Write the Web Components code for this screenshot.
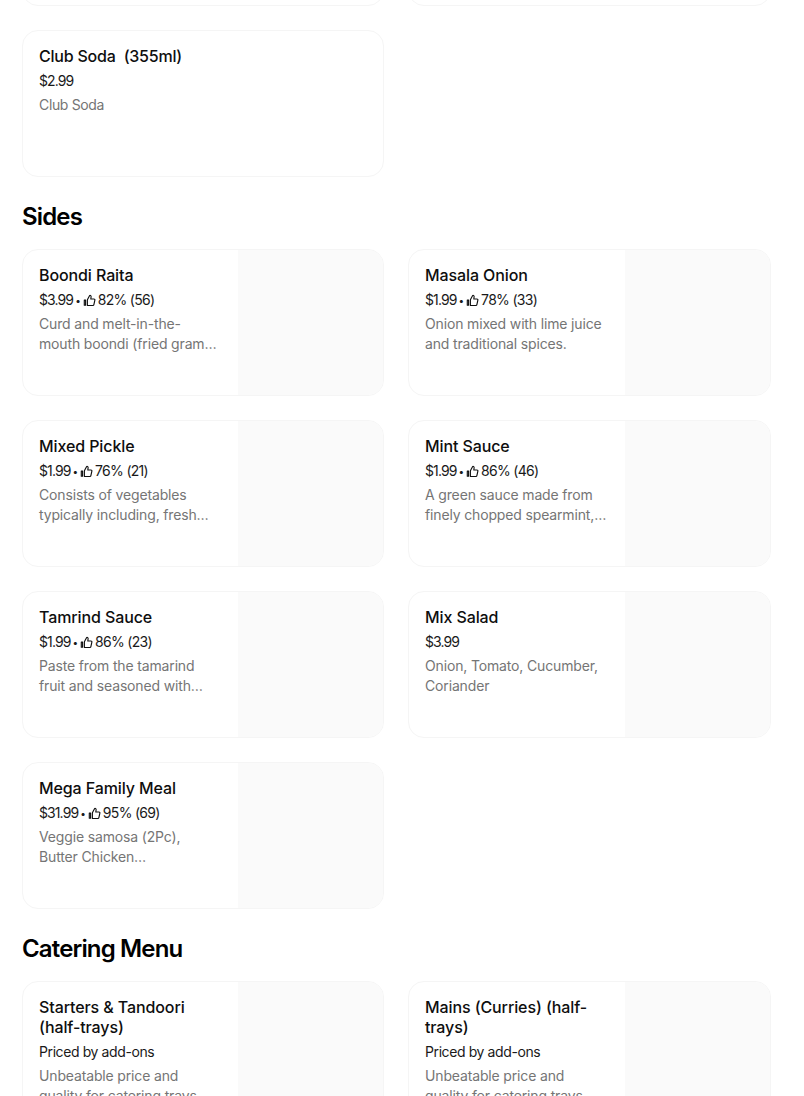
<!doctype html>
<html><head><meta charset="utf-8"><style>
html,body{margin:0;padding:0;background:#fff;height:1096px;overflow:hidden}
body{font-family:Inter,"Liberation Sans",sans-serif;color:#000}
</style></head><body>
<template id="card-t"><style>
:host{display:flex;box-sizing:border-box;height:147px;border:1px solid #f5f5f5;border-radius:16px;overflow:hidden;background:#fff;min-width:0}
.info{flex:1;min-width:0;padding:15px 8px 0 16px;box-sizing:border-box}
.name{font-size:16px;line-height:20px;font-weight:500;color:#0e0e0e;letter-spacing:-.1px;white-space:pre-wrap;padding-right:8px}
:host([tight]) .name{letter-spacing:-.22px}
:host([tight]) .desc{letter-spacing:-.35px}
.meta{display:flex;align-items:center;margin-top:5px;font-size:14px;line-height:20px;color:#1a1a1a;letter-spacing:-.4px;white-space:pre}
.meta.num{letter-spacing:-.9px}
.meta .bul{font-size:10px;margin:0 0 0 2px;letter-spacing:0}
.meta .rate{letter-spacing:-.7px}
.meta svg{width:13px;height:13px;margin:0 2px 0 2px;flex:none}
.desc{margin-top:4px;font-size:14px;line-height:20px;color:#757575;letter-spacing:-.15px;white-space:pre-line}
.img{flex:none;width:145px;background:#fafafa;display:none}
:host([img]) .img{display:block}
</style><div class="info"><div class="name"></div><div class="meta"></div><div class="desc"></div></div><div class="img"></div></template>
<template id="head-t"><style>
:host{display:block;font-size:24px;line-height:28px;font-weight:600;color:#000;letter-spacing:-.85px;margin:26px 0 18px}
</style><slot></slot></template>
<template id="grid-t"><style>
:host{display:grid;grid-template-columns:362px 363px;column-gap:24px;row-gap:24px}
</style><slot></slot></template>
<template id="page-t"><style>
:host{display:block;padding:0 0 0 22px;margin-top:-141px;width:749px}
</style><slot></slot></template>
<menu-page>
<menu-grid>
<menu-card></menu-card>
<menu-card></menu-card>
<menu-card tight name="Club Soda  (355ml)" meta="$2.99" desc="Club Soda"></menu-card>
</menu-grid>
<menu-head>Sides</menu-head>
<menu-grid>
<menu-card img name="Boondi Raita" meta="$3.99" rate="82% (56)" desc="Curd and melt-in-the-
mouth boondi (fried gram…"></menu-card>
<menu-card img name="Masala Onion" meta="$1.99" rate="78% (33)" desc="Onion mixed with lime juice
and traditional spices."></menu-card>
<menu-card img name="Mixed Pickle" meta="$1.99" rate="76% (21)" desc="Consists of vegetables
typically including, fresh…"></menu-card>
<menu-card img name="Mint Sauce" meta="$1.99" rate="86% (46)" desc="A green sauce made from
finely chopped spearmint,…"></menu-card>
<menu-card img name="Tamrind Sauce" meta="$1.99" rate="86% (23)" desc="Paste from the tamarind
fruit and seasoned with…"></menu-card>
<menu-card img name="Mix Salad" meta="$3.99" desc="Onion, Tomato, Cucumber,
Coriander"></menu-card>
<menu-card img name="Mega Family Meal" meta="$31.99" rate="95% (69)" desc="Veggie samosa (2Pc),
Butter Chicken…"></menu-card>
</menu-grid>
<menu-head>Catering Menu</menu-head>
<menu-grid>
<menu-card img name="Starters &amp; Tandoori (half-trays)" meta="Priced by add-ons" text desc="Unbeatable price and
quality for catering trays"></menu-card>
<menu-card img name="Mains (Curries) (half-trays)" meta="Priced by add-ons" text desc="Unbeatable price and
quality for catering trays"></menu-card>
</menu-grid>
</menu-page>
<script>
const THUMB='<svg viewBox="0 0 16 16" fill="none" stroke="#111" stroke-width="1.4" stroke-linejoin="round" stroke-linecap="round"><path d="M5.4 7.2 8.2 1.8c1-.3 1.9.4 1.8 1.5L9.6 6.2h3.9c.8 0 1.3.7 1.1 1.4l-1.2 5.5c-.1.6-.6 1-1.2 1H5.4z"/><path d="M1.6 7.6h1.6v6.3H1.6z"/></svg>';
function tpl(id){return document.getElementById(id).content.cloneNode(true)}
class Simple extends HTMLElement{
  constructor(){super();this.attachShadow({mode:'open'}).appendChild(tpl(this.constructor.t))}
}
class MenuPage extends Simple{static t='page-t'}
class MenuGrid extends Simple{static t='grid-t'}
class MenuHead extends Simple{static t='head-t'}
class MenuCard extends HTMLElement{
  constructor(){super();this.attachShadow({mode:'open'}).appendChild(tpl('card-t'))}
  connectedCallback(){
    const s=this.shadowRoot;
    s.querySelector('.name').textContent=this.getAttribute('name')||'';
    s.querySelector('.desc').textContent=this.getAttribute('desc')||'';
    const m=s.querySelector('.meta');
    m.textContent=this.getAttribute('meta')||'';
    if(!this.hasAttribute('text'))m.classList.add('num');
    const r=this.getAttribute('rate');
    if(r){m.insertAdjacentHTML('beforeend','<span class="bul">•</span>'+THUMB+'<span class="rate">'+r+'</span>')}
  }
}
customElements.define('menu-page',MenuPage);
customElements.define('menu-grid',MenuGrid);
customElements.define('menu-head',MenuHead);
customElements.define('menu-card',MenuCard);
</script>
</body></html>
